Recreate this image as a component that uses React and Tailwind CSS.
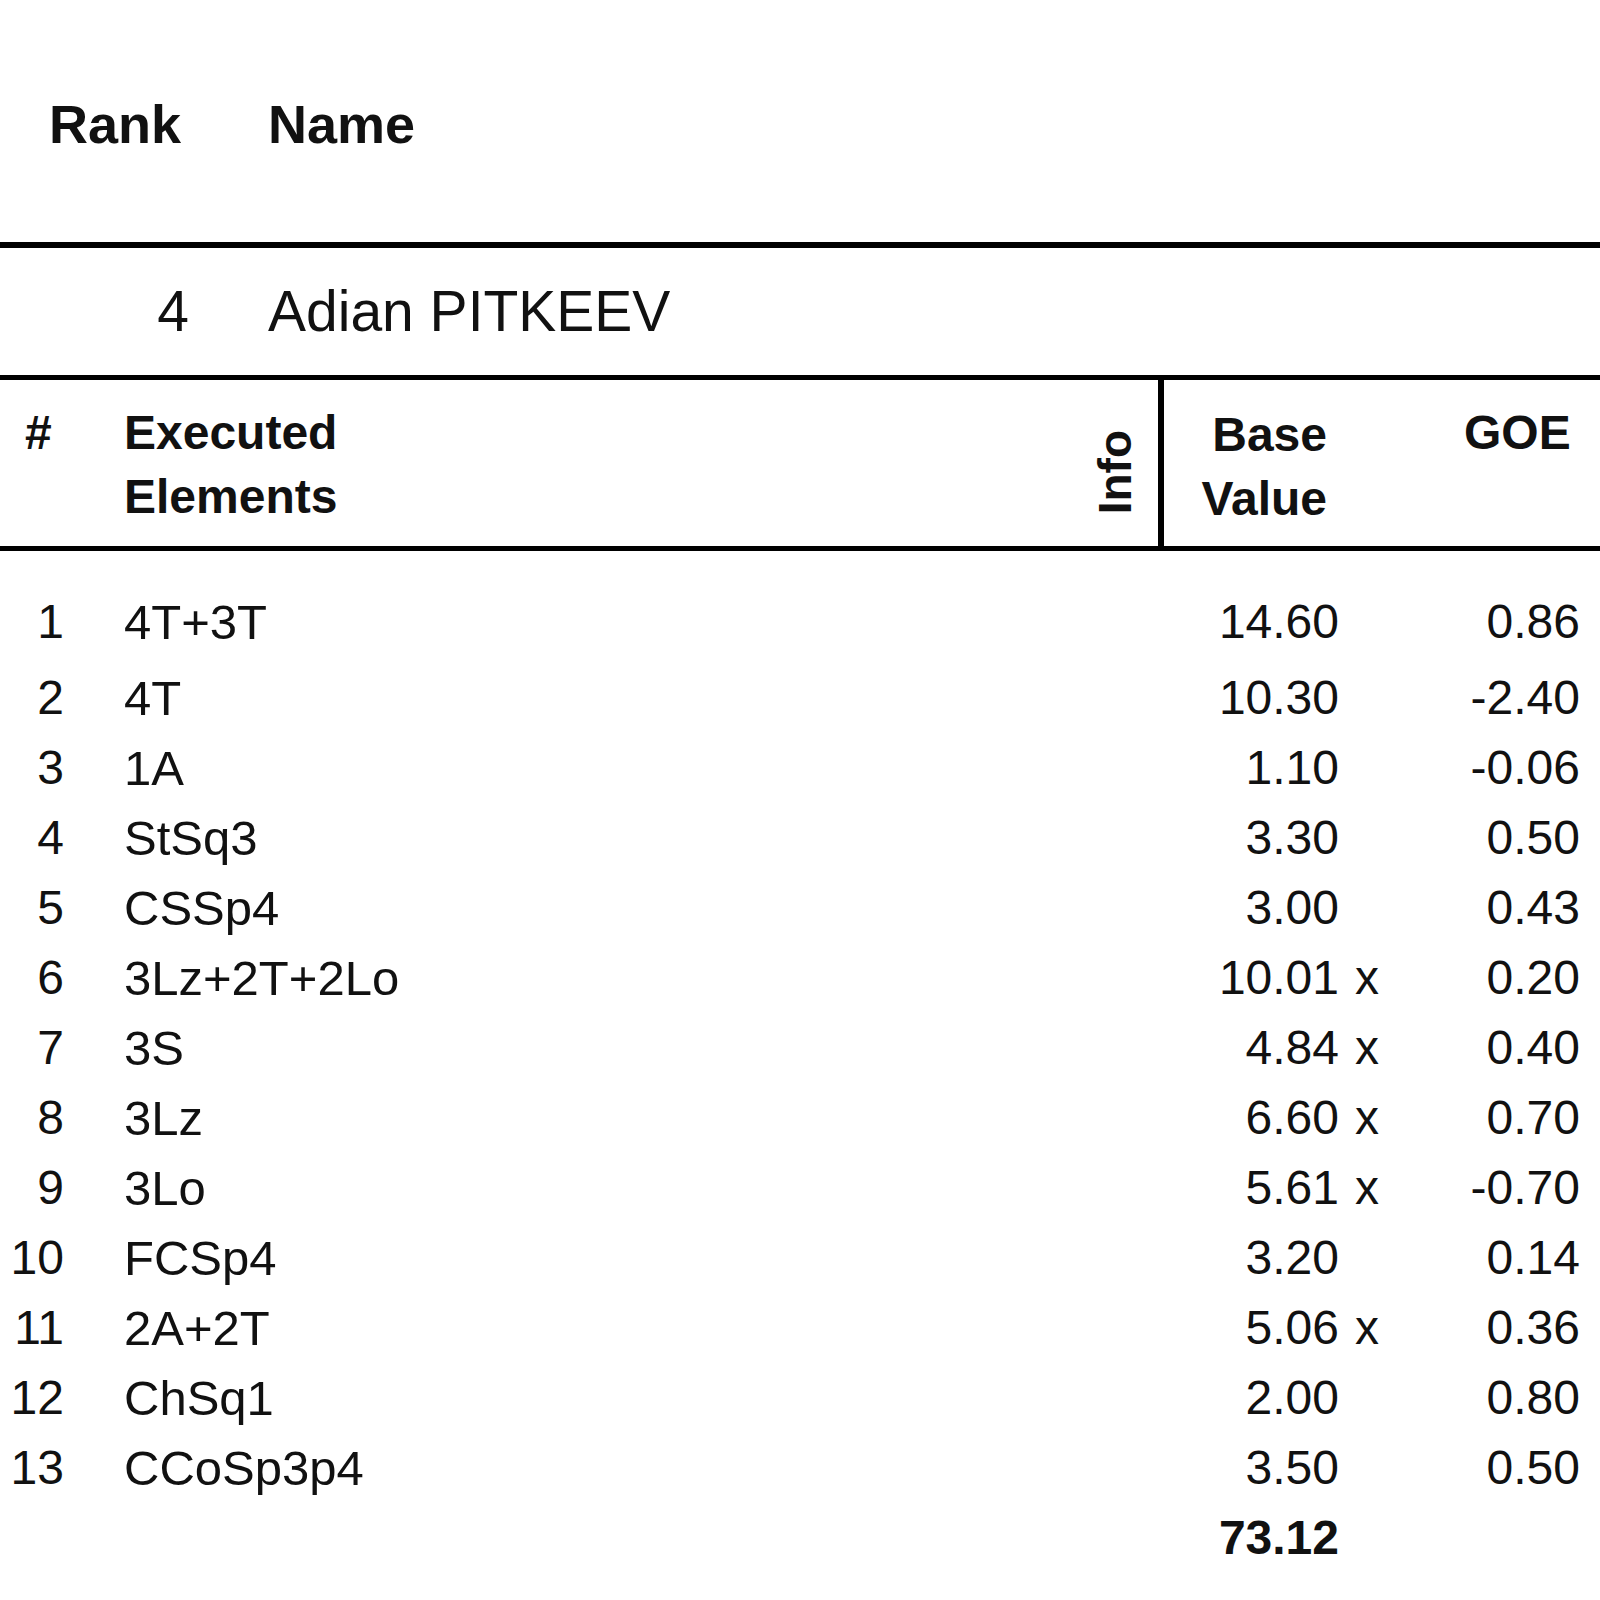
import React from "react";

const elements = [
  { no: 1, name: "4T+3T", base: "14.60", x: false, goe: "0.86" },
  { no: 2, name: "4T", base: "10.30", x: false, goe: "-2.40" },
  { no: 3, name: "1A", base: "1.10", x: false, goe: "-0.06" },
  { no: 4, name: "StSq3", base: "3.30", x: false, goe: "0.50" },
  { no: 5, name: "CSSp4", base: "3.00", x: false, goe: "0.43" },
  { no: 6, name: "3Lz+2T+2Lo", base: "10.01", x: true, goe: "0.20" },
  { no: 7, name: "3S", base: "4.84", x: true, goe: "0.40" },
  { no: 8, name: "3Lz", base: "6.60", x: true, goe: "0.70" },
  { no: 9, name: "3Lo", base: "5.61", x: true, goe: "-0.70" },
  { no: 10, name: "FCSp4", base: "3.20", x: false, goe: "0.14" },
  { no: 11, name: "2A+2T", base: "5.06", x: true, goe: "0.36" },
  { no: 12, name: "ChSq1", base: "2.00", x: false, goe: "0.80" },
  { no: 13, name: "CCoSp3p4", base: "3.50", x: false, goe: "0.50" },
];

const ElementRow = ({ row, first }) => (
  <div
    className={
      first
        ? "flex h-[76px] pr-[20px] text-[48px] leading-[70px]"
        : "flex h-[70px] pr-[20px] text-[48px] leading-[70px]"
    }
  >
    <div className="w-[64px] text-right">{row.no}</div>
    <div className="flex-1 pl-[60px] text-[49px]">{row.name}</div>
    <div className="w-[150px] text-right">{row.base}</div>
    <div className="w-[41px] pl-[16px]">{row.x ? "x" : ""}</div>
    <div className="w-[200px] text-right">{row.goe}</div>
  </div>
);

export default function App() {
  return (
    <div className="w-[1600px] h-[1600px] overflow-hidden bg-white text-[#111] font-['Liberation_Sans',Arial,sans-serif]">
      {/* Rank / Name heading */}
      <div className="flex pt-[93px] pl-[49px] text-[54px] font-bold leading-[62px]">
        <span className="w-[219px]">Rank</span>
        <span>Name</span>
      </div>

      <div className="mt-[87px] h-[6px] bg-black" />

      {/* Skater */}
      <div className="flex h-[127px] text-[57px] leading-[127px]">
        <span className="w-[189px] text-right">4</span>
        <span className="pl-[79px]">Adian PITKEEV</span>
      </div>

      <div className="h-[5px] bg-black" />

      {/* Column headings */}
      <div className="flex h-[166px] text-[48px] font-bold leading-[64px]">
        <div className="w-[124px] pt-[21px] pl-[25px]">#</div>
        <div className="flex-1 pt-[21px]">
          Executed
          <br />
          Elements
        </div>
        <div className="flex w-[72px] flex-col justify-end border-r-[6px] border-black pb-[32px]">
          <span className="block w-[46px] rotate-180 text-[46px] leading-none [writing-mode:vertical-rl]">
            Info
          </span>
        </div>
        <div className="w-[163px] pt-[23px] text-right">
          Base
          <br />
          Value
        </div>
        <div className="w-[273px] pt-[21px] pl-[137px]">GOE</div>
      </div>

      <div className="h-[5px] bg-black" />

      {/* Elements */}
      <div className="mt-[36px]">
        {elements.map((row, i) => (
          <ElementRow key={row.no} row={row} first={i === 0} />
        ))}
        <div className="flex h-[70px] pr-[20px] text-[48px] font-bold leading-[70px]">
          <div className="flex-1" />
          <div className="w-[150px] text-right">73.12</div>
          <div className="w-[241px]" />
        </div>
      </div>
    </div>
  );
}
